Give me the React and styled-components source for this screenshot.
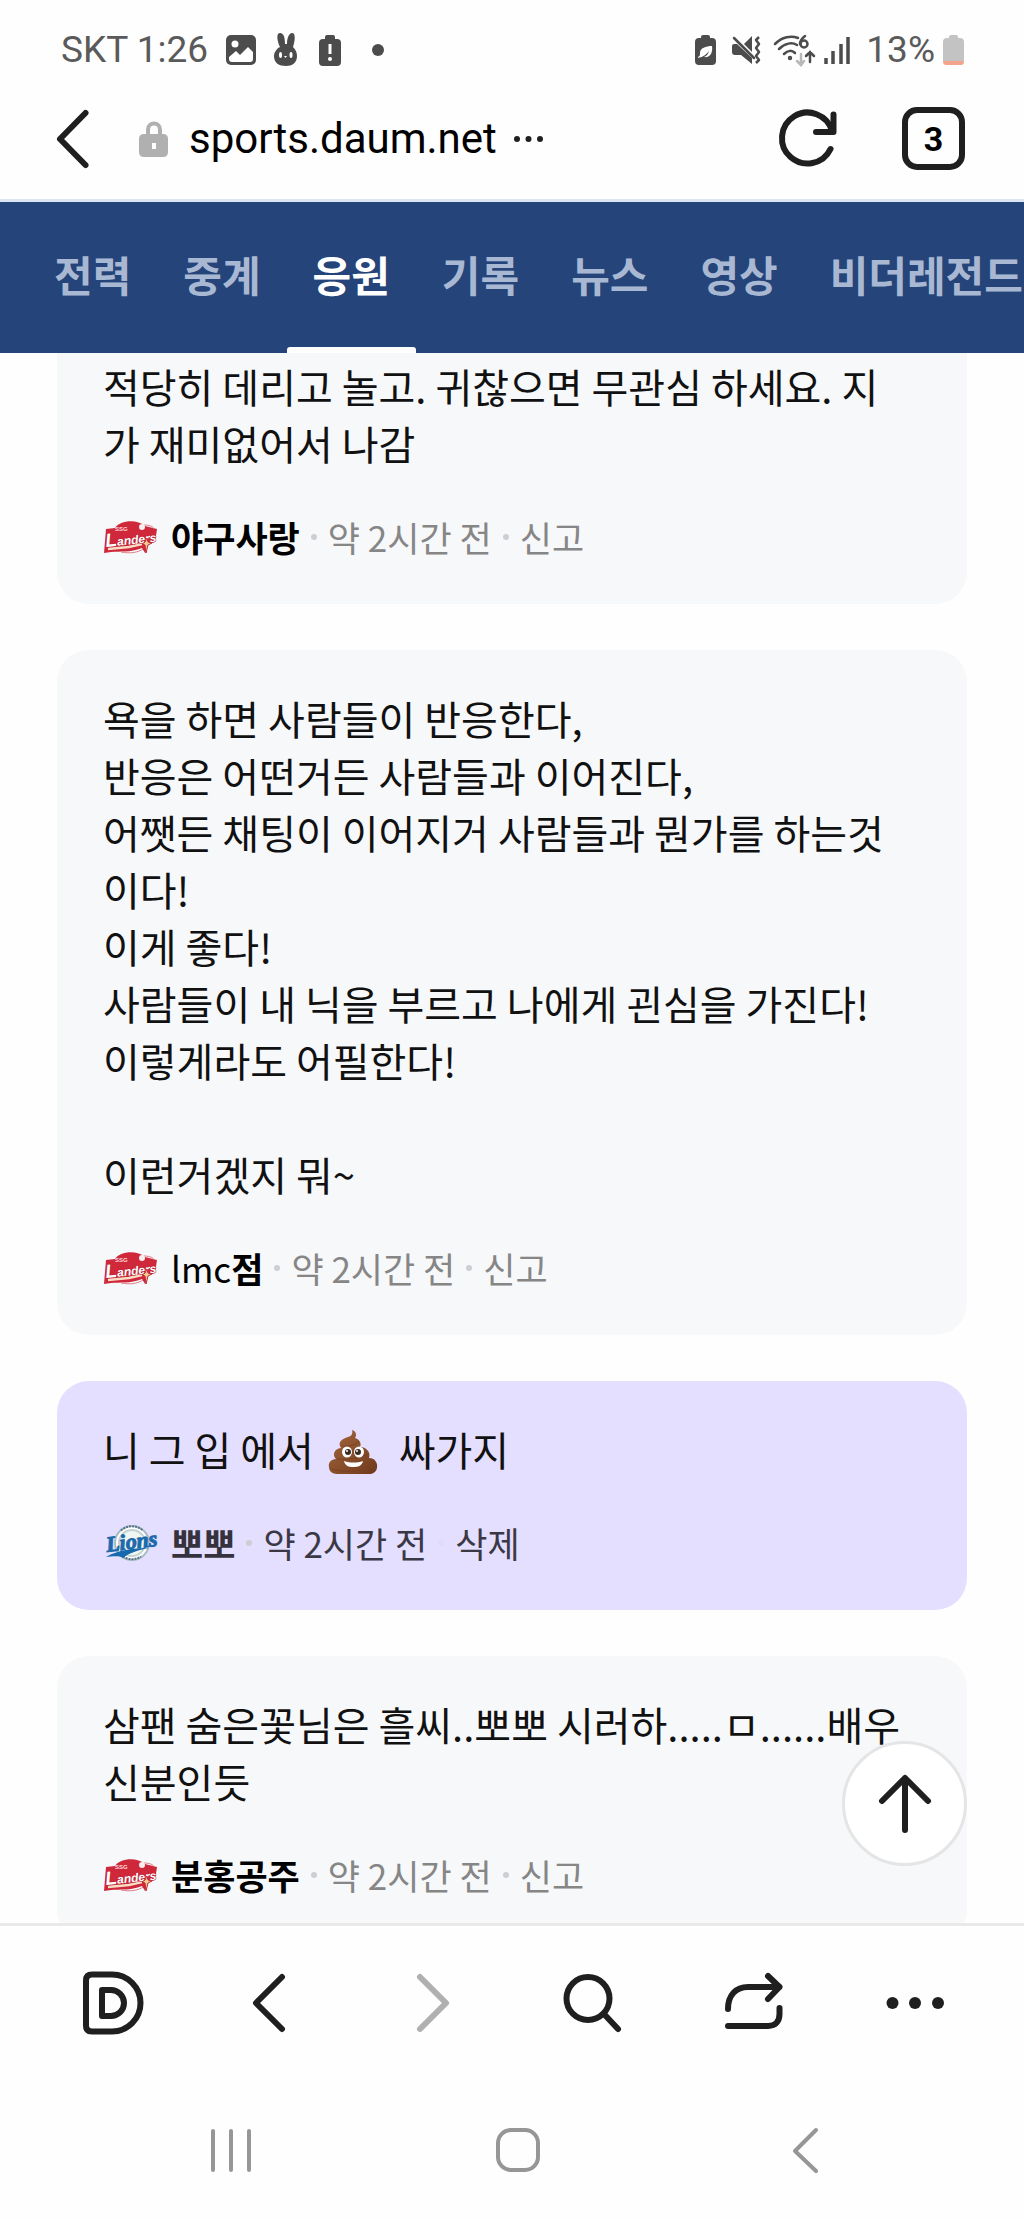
import React from "react";
import styled, { createGlobalStyle } from "styled-components";

const GlobalStyle = createGlobalStyle`
* { box-sizing: border-box; }
body {
  margin: 0;
  background: #fefefe;
  font-family: "Noto Sans CJK KR", "Noto Sans", sans-serif;
}
button {
  padding: 0;
  border: 0;
  background: none;
  color: inherit;
  font: inherit;
}
svg {
  display: block;
  flex: none;
  overflow: visible;
}
`

const Page = styled.div`
height: 100vh;
display: flex;
flex-direction: column;
`

const StatusBar = styled.div`
height: 78px;
padding: 22px 60px 0 61px;
display: flex;
align-items: center;
justify-content: space-between;
color: #4c4c4c;
`

const StatusGroup = styled.div`
display: flex;
align-items: center;
gap: ${(p) => p.$gap}px;
`

const StatusText = styled.span`
color: #5a5a5a;
font-family: Roboto, sans-serif;
font-size: 37px;
font-weight: 400;
line-height: 48px;
`

const AddressBar = styled.header`
height: 124px;
padding: 0 59px 0 56px;
border-bottom: 3px solid #dce6f3;
display: flex;
align-items: center;
color: #1f1f1f;
`

const LockIcon = styled.svg`
margin: 0 20px 0 50px;
`

const Address = styled.span`
color: #000;
font-family: Roboto, sans-serif;
font-size: 42px;
line-height: 56px;
`

const MoreButton = styled.button`
margin: 0 auto 0 17px;
`

const TabCount = styled.button`
width: 63px;
height: 63px;
margin-left: 62px;
border: 6px solid #1f1f1f;
border-radius: 15px;
color: #000;
font-family: Roboto, sans-serif;
font-size: 34px;
font-weight: 700;
line-height: 50px;
`

const Tabs = styled.nav`
flex: none;
height: 151px;
padding-left: 28px;
display: flex;
overflow: hidden;
background-color: #24447a;
`

const Tab = styled.a`
flex: none;
padding: 0 26px;
color: ${(p) => (p.$active ? "#fff" : "#a9b8d2")};
font-size: 42px;
font-weight: 700;
line-height: 144px;
text-decoration: none;
white-space: nowrap;
position: relative;

&::after {
  content: "";
  display: ${(p) => (p.$active ? "block" : "none")};
  position: absolute;
  left: 0;
  right: 0;
  bottom: 0;
  height: 6px;
  border-radius: 3px 3px 0 0;
  background-color: #fff;
}
`

const Feed = styled.main`
flex: 1;
min-height: 0;
position: relative;
`

const CommentList = styled.div`
height: 100%;
padding: 0 57px;
display: flex;
flex-direction: column;
gap: 46px;
overflow-y: auto;
scrollbar-width: none;
`

const Comment = styled.article`
flex: none;
padding: ${(p) => (p.$continued ? "5px" : "40px")} 45px 43px 46px;
border-radius: ${(p) => (p.$continued ? "0 0 32px 32px" : "32px")};
background-color: ${(p) => (p.$mine ? "#e4deff" : "#f7f8fa")};
`

const CommentText = styled.p`
margin: 0 0 41px;
color: #111;
font-size: 40px;
line-height: 57px;
white-space: pre-wrap;
`

const Meta = styled.div`
display: flex;
align-items: center;
color: ${(p) => (p.$mine ? "#3b3845" : "#868686")};
font-size: 35px;
line-height: 48px;
white-space: nowrap;
`

const Nickname = styled.strong`
margin-left: 12px;
color: ${(p) => (p.$mine ? "#35323d" : "#000")};
font-weight: 700;
`

const Latin = styled.span`
font-weight: 400;
`

const Dot = styled.span`
width: 6px;
height: 6px;
margin: 0 11px;
border-radius: 50%;
background-color: ${(p) => (p.$faint ? "#e0dcf8" : "#cdced3")};
`

const EmojiSvg = styled.svg`
display: inline-block;
vertical-align: -9px;
`

const TopButton = styled.button`
position: absolute;
right: 57px;
bottom: 57px;
width: 125px;
height: 125px;
border: 3px solid #e3e5e6;
border-radius: 50%;
background-color: #fff;
color: #1f1f1f;
display: flex;
align-items: center;
justify-content: center;
`

const Toolbar = styled.nav`
flex: none;
height: 157px;
padding: 0 30px;
border-top: 3px solid #e9e9e9;
display: grid;
grid-template-columns: repeat(6, 1fr);
`

const SystemBar = styled.nav`
flex: none;
height: 139px;
padding: 0 75px 0 87px;
display: grid;
grid-template-columns: repeat(3, 1fr);
`

const BarButton = styled.button`
display: flex;
align-items: center;
justify-content: center;
color: ${(p) => p.$color || "#1f1f1f"};
`

const Stroke = ({ size = 64, width = 6, children }) => (
  <svg width={size} height={size} viewBox={`0 0 ${size} ${size}`} fill="none" stroke="currentColor"
    strokeWidth={width} strokeLinecap="round" strokeLinejoin="round" aria-hidden="true">
    {children}
  </svg>
)

const LandersLogo = () => (
  <svg width="56" height="36" viewBox="0 0 56 36" role="img" aria-label="SSG Landers">
    <path d="M3 10 12 9C17 1 34 0 42 7L54 10 52 23 45 25 42 34 39 29C27 34 17 32 8 33L1 34Z" fill="#d0283b" />
    <path d="M41 6C47 6 51 8 51 10M18 33C28 35 36 33 40 30" fill="none" stroke="#dd7f89" strokeWidth="1" />
    <circle cx="39" cy="8" r="3" fill="#fbeef0" />
    <text x="12" y="12" fontFamily="Liberation Sans, sans-serif" fontSize="6" fontWeight="700" fill="#ffd9dc">SSG</text>
    <path d="M5 30 26 28 39 25" fill="none" stroke="#f8dcc4" strokeWidth="2.500" />
    <text x="3" y="28" transform="rotate(-6 3 28)" fontFamily="Liberation Sans, sans-serif" fontSize="12"
      fontWeight="700" fontStyle="italic" fill="#fff" stroke="#b71f33" strokeWidth="1" paintOrder="stroke">
      <tspan fontSize="19">L</tspan>anders
    </text>
    <path d="M44 19 45 23 49 24 45 26 43 34 42 26 39 25 42 23Z" fill="#f3c98c" stroke="#c4283a" strokeWidth="1" />
  </svg>
)

const LionsLogo = () => (
  <svg width="56" height="36" viewBox="0 0 56 36" role="img" aria-label="Samsung Lions">
    <circle cx="29" cy="18" r="17" fill="#fff" stroke="#a9bcc3" strokeWidth="2" />
    <circle cx="29" cy="18" r="13" fill="#f0f6f2" stroke="#c3d3d2" strokeWidth="2" />
    <path d="M18 5.500A16.500 16.500 0 0 1 40 5.500M20 31.500A16.500 16.500 0 0 0 38 31.500" fill="none" stroke="#58748a" strokeWidth="2" strokeDasharray="2 1" />
    <path d="M3 32C15 25 30 23 46 23 35 25 26 28 20 33 15 30 8 32 3 32Z" fill="#1769ae" />
    <text x="4" y="27" transform="rotate(-7 4 27)" fontFamily="Liberation Serif, serif" fontSize="22"
      fontWeight="700" fontStyle="italic" fill="#1c69ab" stroke="#1c69ab" strokeWidth="1">Lions</text>
  </svg>
)

const PoopEmoji = () => (
  <EmojiSvg width="58" height="46" viewBox="0 0 58 46" role="img" aria-label="💩">
    <defs>
      <linearGradient id="poop" x1="0" y1="0" x2="1" y2="1">
        <stop offset="0" stopColor="#a5673c" />
        <stop offset="1" stopColor="#6f3a1c" />
      </linearGradient>
    </defs>
    <path d="M29 1C33 2 34 6 32 9 36 10 39 14 37 18 44 18 48 24 46 29 52 29 55 34 54 39 53 43 50 45 46 45H14C9 45 6 42 6 38 5 34 8 30 13 30 9 26 11 20 18 19 14 13 19 10 25 8 29 7 30 4 29 1Z" fill="url(#poop)" />
    <path d="M19 17C26 18 32 16 36 12M14 30C24 31 38 29 45 25M9 40C20 44 42 43 52 37" fill="none" stroke="#7a4222" strokeWidth="1" />
    <ellipse cx="24" cy="23" rx="5" ry="5.500" fill="#fff" />
    <ellipse cx="36" cy="23" rx="5" ry="5.500" fill="#fff" />
    <circle cx="25" cy="23" r="3" fill="#3a2a24" />
    <circle cx="35" cy="23" r="3" fill="#3a2a24" />
    <circle cx="24" cy="22" r="1" fill="#fff" />
    <circle cx="34" cy="22" r="1" fill="#fff" />
    <path d="M21 32C27 34 34 34 40 32 39 37 35 38 30 38 26 38 22 37 21 32Z" fill="#fff" />
  </EmojiSvg>
)

const menus = ["전력", "중계", "응원", "기록", "뉴스", "영상", "비더레전드"]

const comments = [
  {
    id: 1,
    continued: true,
    text: "적당히 데리고 놀고. 귀찮으면 무관심 하세요. 지\n가 재미없어서 나감",
    name: "야구사랑",
  },
  {
    id: 2,
    text: "욕을 하면 사람들이 반응한다,\n반응은 어떤거든 사람들과 이어진다,\n어쨋든 채팅이 이어지거 사람들과 뭔가를 하는것\n이다!\n이게 좋다!\n사람들이 내 닉을 부르고 나에게 괸심을 가진다!\n이렇게라도 어필한다!\n\n이런거겠지 뭐~",
    name: <><Latin>lmc</Latin>점</>,
  },
  {
    id: 3,
    mine: true,
    text: <>니 그 입 에서 <PoopEmoji />{"  "}싸가지</>,
    name: "뽀뽀",
  },
  {
    id: 4,
    text: "삼팬 숨은꽃님은 흘씨..뽀뽀 시러하.....ㅁ......배우\n신분인듯",
    name: "분홍공주",
  },
]

const StatusIcons = () => (
  <StatusBar>
    <StatusGroup $gap={18}>
      <StatusText>SKT 1:26</StatusText>
      <svg width="30" height="30" viewBox="0 0 30 30" aria-hidden="true">
        <rect width="30" height="30" rx="5" fill="currentColor" />
        <circle cx="9" cy="9" r="3.500" fill="#fff" />
        <path d="M3 22 10 16 14 20 22 12 27 17V24Q27 27 24 27H6Q3 27 3 24Z" fill="#fff" />
      </svg>
      <svg width="26" height="34" viewBox="0 0 26 34" aria-hidden="true">
        <path d="M6 14C3 8 2 0 6 0 10 0 11 5 11 11H13C13 5 15 0 18 0 22 0 21 8 19 14 22 17 23 20 23 23 23 30 18 33 12 33 5 33 0 30 0 23 0 20 2 16 6 14Z" fill="currentColor" />
        <ellipse cx="6.500" cy="22" rx="1.500" ry="3" fill="#fff" />
        <ellipse cx="17" cy="22" rx="1.500" ry="3" fill="#fff" />
        <path d="M10 23H13L11.500 25Z" fill="#fff" />
      </svg>
      <svg width="26" height="31" viewBox="0 0 26 31" aria-hidden="true">
        <path d="M7 4V2Q7 0 9 0H15Q17 0 17 2V4H19Q23 4 23 8V27Q23 31 19 31H5Q1 31 1 27V8Q1 4 5 4Z" fill="currentColor" />
        <path d="M12 9V19" stroke="#fff" strokeWidth="3" />
        <circle cx="12" cy="24" r="2" fill="#fff" />
      </svg>
      <svg width="32" height="12" viewBox="0 0 32 12" aria-hidden="true">
        <circle cx="16" cy="6" r="6" fill="currentColor" />
      </svg>
    </StatusGroup>
    <StatusGroup $gap={8}>
      <svg width="29" height="30" viewBox="0 0 29 30" aria-hidden="true">
        <path d="M6 3V2Q6 0 8 0H13Q15 0 15 2V3H17Q21 3 21 7V26Q21 30 17 30H4Q0 30 0 26V7Q0 3 4 3Z" fill="currentColor" />
        <path d="M3 22C5 21 5 20 5 18 5 13 11 11 17 11 18 18 15 23 9 22 12 21 13 19 14 16 10 21 7 22 3 23Z" fill="#fff" />
      </svg>
      <svg width="34" height="30" viewBox="0 0 34 30" aria-hidden="true">
        <path d="M0 11Q0 9 2 9H5L20 23V29L9 20H3Q0 20 0 17ZM20 1V17L12 9Z" fill="currentColor" />
        <path d="M2 3 22 23" stroke="currentColor" strokeWidth="2.500" strokeLinecap="round" />
        <path d="M27 2 24 5 27 9 24 13 27 17 24 21 27 25 24 28" fill="none" stroke="currentColor" strokeWidth="2.500" strokeLinejoin="round" />
      </svg>
      <svg width="42" height="30" viewBox="0 0 42 30" fill="none" stroke="currentColor" strokeWidth="2.500" strokeLinecap="round" aria-hidden="true">
        <path d="M1 9C8 2 17 0 24 3M5 14C11 8 18 7 23 10M10 19C14 15 18 15 21 18" />
        <circle cx="16" cy="23" r="1" />
        <path d="M31 1C27 4 26 7 26 9" />
        <circle cx="30" cy="9" r="3.500" />
        <path d="M27 19V29M23 26 27 30 30 26" stroke="#b8b8b8" />
        <path d="M36 27V17M32 21 36 17 40 21" />
      </svg>
      <svg width="34" height="28" viewBox="0 0 34 28" stroke="currentColor" strokeWidth="3.500" aria-hidden="true">
        <path d="M2 22V28M9 15V28M17 8V28M24 1V28" />
      </svg>
      <StatusText>13%</StatusText>
      <svg width="21" height="30" viewBox="0 0 21 30" aria-hidden="true">
        <path d="M6 3V2Q6 0 8 0H13Q15 0 15 2V3H17Q21 3 21 7V26H0V7Q0 3 4 3Z" fill="#c3c3c3" />
        <path d="M0 26H21Q21 30 18 30H3Q0 30 0 26Z" fill="#f2a48c" />
      </svg>
    </StatusGroup>
  </StatusBar>
)

export default class App extends React.Component {
  state = {
    active: "응원",
  };

  list = React.createRef();

  scrollToTop = () => {
    this.list.current.scrollTop = 0;
  };

  render() {
    return (
      <Page>
        <GlobalStyle />
        <StatusIcons />
        <AddressBar>
          <button aria-label="뒤로">
            <svg width="33" height="58" viewBox="0 0 33 58" fill="none" stroke="currentColor" strokeWidth="6" strokeLinecap="round" strokeLinejoin="round">
              <path d="M29.500 3 4 29 29.500 55" />
            </svg>
          </button>
          <LockIcon width="30" height="36" viewBox="0 0 30 36" aria-hidden="true">
            <path d="M9 16V8.500A6 6 0 0 1 21 8.500V16" fill="none" stroke="#b0b0b0" strokeWidth="4" />
            <path d="M5 13H24Q29 13 29 18V31Q29 36 24 36H5Q0 36 0 31V18Q0 13 5 13ZM13 22V28H17V22Z" fill="#b0b0b0" fillRule="evenodd" />
          </LockIcon>
          <Address>sports.daum.net</Address>
          <MoreButton aria-label="주소 더보기">
            <svg width="30" height="6" viewBox="0 0 30 6" fill="#1f1f1f">
              <circle cx="3" cy="3" r="3" />
              <circle cx="14.500" cy="3" r="3" />
              <circle cx="26" cy="3" r="3" />
            </svg>
          </MoreButton>
          <button aria-label="새로고침">
            <Stroke>
              <path d="M54.500 42A25.500 25.500 0 1 1 56 24" />
              <path d="M57.500 7.500V25H40" />
            </Stroke>
          </button>
          <TabCount aria-label="탭 3개">3</TabCount>
        </AddressBar>

        <Tabs>
          {menus.map((menu) => (
            <Tab key={menu} href="#" $active={menu === this.state.active}
              onClick={() => this.setState({ active: menu })}>{menu}</Tab>
          ))}
        </Tabs>

        <Feed>
          <CommentList ref={this.list}>
            {comments.map((c) => (
              <Comment key={c.id} $mine={c.mine} $continued={c.continued}>
                <CommentText>{c.text}</CommentText>
                <Meta $mine={c.mine}>
                  {c.mine ? <LionsLogo /> : <LandersLogo />}
                  <Nickname $mine={c.mine}>{c.name}</Nickname>
                  <Dot />
                  <span>약 2시간 전</span>
                  <Dot $faint={c.mine} />
                  <button>{c.mine ? "삭제" : "신고"}</button>
                </Meta>
              </Comment>
            ))}
          </CommentList>
          <TopButton aria-label="맨 위로" onClick={this.scrollToTop}>
            <Stroke>
              <path d="M32 58V6M9 29 32 6 55 29" />
            </Stroke>
          </TopButton>
        </Feed>

        <Toolbar>
          <BarButton aria-label="다음 홈">
            <Stroke>
              <path d="M14 3.500H34A28.500 28.500 0 0 1 34 60.500H14Q8 60.500 8 54.500V9.500Q8 3.500 14 3.500Z" />
              <path d="M24 19H33A13 13 0 0 1 33 45H24Z" />
            </Stroke>
          </BarButton>
          <BarButton aria-label="이전">
            <Stroke><path d="M43 6 17 32 43 58" /></Stroke>
          </BarButton>
          <BarButton aria-label="다음" $color="#b0b0b0">
            <Stroke><path d="M20 6 46 32 20 58" /></Stroke>
          </BarButton>
          <BarButton aria-label="검색">
            <Stroke>
              <circle cx="28" cy="27.500" r="21.500" />
              <path d="M44 43 58 58" />
            </Stroke>
          </BarButton>
          <BarButton aria-label="공유">
            <Stroke>
              <path d="M7 38C7 24 15 16 27 16H58" />
              <path d="M47 5 58.500 16 47 28" />
              <path d="M7 55H47C55 55 58.500 50 58.500 43V37" />
            </Stroke>
          </BarButton>
          <BarButton aria-label="더보기">
            <svg width="64" height="64" viewBox="0 0 64 64" fill="currentColor">
              <circle cx="10.500" cy="32" r="6" />
              <circle cx="33" cy="32" r="6" />
              <circle cx="56" cy="32" r="6" />
            </svg>
          </BarButton>
        </Toolbar>

        <SystemBar>
          <BarButton aria-label="최근 앱" $color="#969696">
            <Stroke size={48} width={4}><path d="M6 5V44M24 5V44M42 5V44" /></Stroke>
          </BarButton>
          <BarButton aria-label="홈 화면" $color="#969696">
            <Stroke size={48} width={4}><rect x="4" y="4" width="40" height="40" rx="13" /></Stroke>
          </BarButton>
          <BarButton aria-label="뒤로 가기" $color="#969696">
            <Stroke size={48} width={4}><path d="M35 4 14 25 35 45" /></Stroke>
          </BarButton>
        </SystemBar>
      </Page>
    );
  }
}
